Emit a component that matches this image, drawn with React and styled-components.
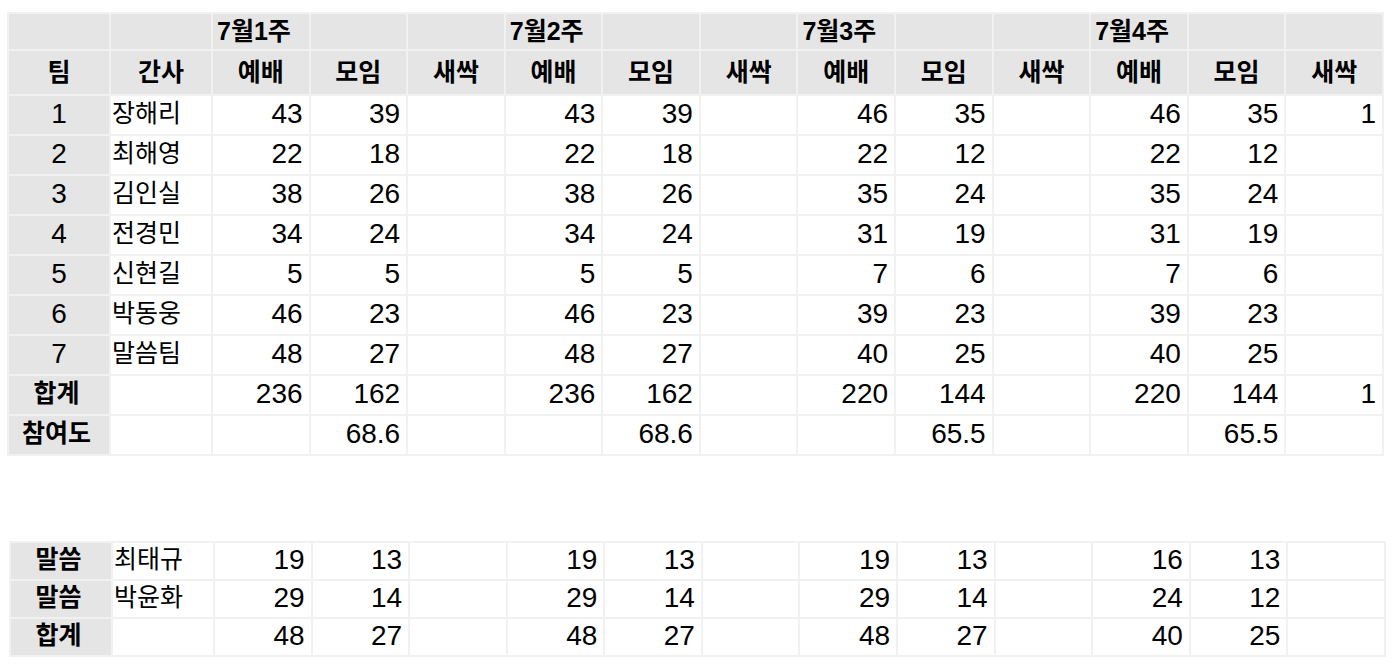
import React from 'react';
import styled, { createGlobalStyle } from 'styled-components';

const weeks = ['7월1주', '7월2주', '7월3주', '7월4주'];

const teams = [
  ['1', '장해리', [43, 39, ''], [43, 39, ''], [46, 35, ''], [46, 35, 1]],
  ['2', '최해영', [22, 18, ''], [22, 18, ''], [22, 12, ''], [22, 12, '']],
  ['3', '김인실', [38, 26, ''], [38, 26, ''], [35, 24, ''], [35, 24, '']],
  ['4', '전경민', [34, 24, ''], [34, 24, ''], [31, 19, ''], [31, 19, '']],
  ['5', '신현길', [5, 5, ''], [5, 5, ''], [7, 6, ''], [7, 6, '']],
  ['6', '박동웅', [46, 23, ''], [46, 23, ''], [39, 23, ''], [39, 23, '']],
  ['7', '말씀팀', [48, 27, ''], [48, 27, ''], [40, 25, ''], [40, 25, '']],
];

const totals = [
  { label: '합계', weeks: [[236, 162, ''], [236, 162, ''], [220, 144, ''], [220, 144, 1]] },
  { label: '참여도', weeks: [['', '68.6', ''], ['', '68.6', ''], ['', '65.5', ''], ['', '65.5', '']] },
];

const word = [
  ['말씀', '최태규', [19, 13, ''], [19, 13, ''], [19, 13, ''], [16, 13, '']],
  ['말씀', '박윤화', [29, 14, ''], [29, 14, ''], [29, 14, ''], [24, 12, '']],
  ['합계', '', [48, 27, ''], [48, 27, ''], [48, 27, ''], [40, 25, '']],
];

const GlobalStyle = createGlobalStyle`
  body{
    margin:0;
    background:#ffffff;
    color:#000000;
    font-family:"Liberation Sans","Noto Sans CJK KR",sans-serif;
  }
`;

const Page = styled.div`
  display:flex;
  flex-direction:column;
  gap:85px;
  padding:12px 0 0 7px;
`;

const Sheet = styled.table`
  border-collapse:separate;
  border-spacing:0;
  table-layout:fixed;
  width:1377px;
  margin-left:${p => p.$shift || 0}px;
  border-top:2px solid #f1f1f1;
  border-left:2px solid #f1f1f1;
`;

const Col = styled.col`
  width:${p => p.$w}px;
`;

const Row = styled.tr`
  height:${p => p.$h}px;
`;

const Cell = styled.td`
  box-sizing:border-box;
  border-right:2px solid #f1f1f1;
  border-bottom:2px solid #f1f1f1;
  padding:0 6px 3px 1px;
  vertical-align:middle;
  line-height:1;
  white-space:nowrap;
  font-size:25px;
  background:${p => (p.$gray ? '#e5e5e5' : '#ffffff')};
  font-weight:${p => (p.$bold ? 700 : 400)};
  text-align:${p => p.$align || 'left'};
`;

const Num = styled(Cell)`
  font-size:28px;
  text-align:right;
`;

const TeamNo = styled(Num)`
  background:#e5e5e5;
  text-align:center;
  padding:0 0 3px;
`;

const Head = styled(Cell).attrs({ as: 'th' })`
  background:#e5e5e5;
  font-weight:700;
  text-align:center;
  padding:0 0 1px;
`;

const WeekHead = styled(Head)`
  text-align:left;
  padding:0 0 1px 4px;
`;

function Cols() {
  return (
    <colgroup>
      <Col $w={102} />
      <Col $w={102} />
      {Array.from({ length: 12 }).map((_, i) => (
        <Col key={i} $w={97.58} />
      ))}
    </colgroup>
  );
}

function WeekCells({ data }) {
  return data.flatMap((w, i) =>
    w.map((v, j) => <Num key={`${i}-${j}`}>{v}</Num>)
  );
}

function App() {
  return (
    <>
      <GlobalStyle />
      <Page>
        <Sheet>
          <Cols />
          <thead>
            <Row $h={37}>
              <Head />
              <Head />
              {weeks.map(w => [
                <WeekHead key={w}>{w}</WeekHead>,
                <Head key={`${w}-b`} />,
                <Head key={`${w}-c`} />,
              ])}
            </Row>
            <Row $h={45}>
              <Head>팀</Head>
              <Head>간사</Head>
              {weeks.map(w => [
                <Head key={`${w}-1`}>예배</Head>,
                <Head key={`${w}-2`}>모임</Head>,
                <Head key={`${w}-3`}>새싹</Head>,
              ])}
            </Row>
          </thead>
          <tbody>
            {teams.map(([no, name, ...data]) => (
              <Row $h={40} key={no}>
                <TeamNo>{no}</TeamNo>
                <Cell>{name}</Cell>
                <WeekCells data={data} />
              </Row>
            ))}
            {totals.map(t => (
              <Row $h={40} key={t.label}>
                <Cell $gray $bold $align="center">{t.label}</Cell>
                <Cell />
                <WeekCells data={t.weeks} />
              </Row>
            ))}
          </tbody>
        </Sheet>

        <Sheet $shift={2}>
          <Cols />
          <tbody>
            {word.map(([label, name, ...data], i) => (
              <Row $h={38} key={i}>
                <Cell $gray $bold $align="center">{label}</Cell>
                <Cell>{name}</Cell>
                <WeekCells data={data} />
              </Row>
            ))}
          </tbody>
        </Sheet>
      </Page>
    </>
  );
}

export default App;
